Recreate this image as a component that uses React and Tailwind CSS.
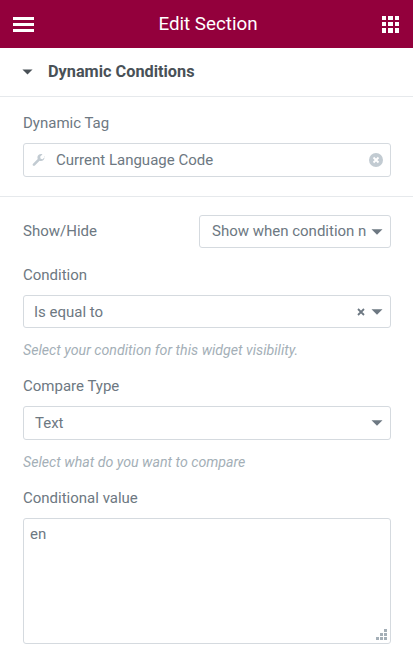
const font = { fontFamily: 'Roboto, sans-serif' };

function Caret({ color = '#6d7882', className = '' }) {
  return (
    <svg width="12" height="6" viewBox="0 0 12 6" className={className}>
      <path d="M0.5 0.2 H11.5 L6 5.8 Z" fill={color} />
    </svg>
  );
}

function Label({ children, className = '' }) {
  return <div className={`text-[15px] leading-[20px] text-[#6d7882] ${className}`}>{children}</div>;
}

function Hint({ children }) {
  return <div className="text-[14.2px] leading-[20px] italic text-[#a4afb7]">{children}</div>;
}

export default function App() {
  return (
    <div style={font} className="w-[413px] h-[654px] overflow-hidden bg-white">
      <header className="h-[48px] bg-[#93003c] flex items-center justify-between pl-[13px] pr-[14px] text-white">
        <div className="flex flex-col gap-[3px] w-[21px]">
          <span className="h-[3px] bg-white block" />
          <span className="h-[3px] bg-white block" />
          <span className="h-[3px] bg-white block" />
        </div>
        <div className="text-[18.8px] leading-[24px]">Edit Section</div>
        <div className="grid grid-cols-3 gap-[2px] w-[17px] h-[17px]">
          {[0, 1, 2, 3, 4, 5, 6, 7, 8].map((i) => (
            <span key={i} className="bg-white block" />
          ))}
        </div>
      </header>

      <section className="h-[49px] border-b border-[#e6e9ec] flex items-center pl-[22px]">
        <Caret color="#495157" className="mr-[15px] w-[11px]" />
        <div className="text-[16.3px] font-bold text-[#495157] leading-[20px]">Dynamic Conditions</div>
      </section>

      <section className="h-[100px] border-b border-[#e6e9ec] pl-[23px] pr-[22px] pt-[16px]">
        <Label>Dynamic Tag</Label>
        <div className="mt-[10px] h-[34px] border border-[#d5dadf] rounded-[3px] flex items-center pl-[8px] pr-[7px]">
          <svg width="14" height="14" viewBox="0 0 24 24" fill="#c2cbd2" className="mr-[10px]">
            <path d="M22.7 6.3l-4.2 4.2-3.6-.9-.9-3.6 4.2-4.2c-2.4-1-5.2-.6-7.1 1.3-1.9 1.9-2.4 4.6-1.4 7L1.3 18.5c-.9.9-.9 2.4 0 3.3.9.9 2.4.9 3.3 0l8.4-8.4c2.4 1 5.1.5 7-1.4 1.9-1.9 2.4-4.7 1.4-7.1z" transform="translate(0.5 0.5) scale(0.96)" />
          </svg>
          <div className="flex-1 text-[15px] text-[#6d7882]">Current Language Code</div>
          <svg width="14" height="14" viewBox="0 0 14 14">
            <circle cx="7" cy="7" r="7" fill="#c2cbd2" />
            <path d="M4.5 4.5l5 5M9.5 4.5l-5 5" stroke="#fff" strokeWidth="1.8" />
          </svg>
        </div>
      </section>

      <section className="pl-[23px] pr-[22px] pt-[18px]">
        <div className="flex items-center justify-between h-[33px]">
          <Label className="mb-[2px]">Show/Hide</Label>
          <div className="w-[192px] h-[33px] border border-[#d5dadf] rounded-[3px] flex items-center pl-[12px] pr-[7px] overflow-hidden">
            <div className="flex-1 overflow-hidden whitespace-nowrap text-[15px] text-[#6d7882]">Show when condition not met</div>
            <Caret className="ml-[5px] shrink-0" />
          </div>
        </div>

        <Label className="mt-[17px]">Condition</Label>
        <div className="mt-[10px] h-[33px] border border-[#d5dadf] rounded-[3px] flex items-center pl-[10px] pr-[7px]">
          <div className="flex-1 text-[15px] text-[#6d7882] pt-[1px]">Is equal to</div>
          <svg width="8" height="8" viewBox="0 0 8 8" className="mr-[6px]">
            <path d="M1 1l6 6M7 1L1 7" stroke="#6d7882" strokeWidth="1.8" />
          </svg>
          <Caret />
        </div>
        <div className="mt-[12px]"><Hint>Select your condition for this widget visibility.</Hint></div>

        <Label className="mt-[16px]">Compare Type</Label>
        <div className="mt-[10px] h-[34px] border border-[#d5dadf] rounded-[3px] flex items-center pl-[11px] pr-[7px]">
          <div className="flex-1 text-[15px] text-[#6d7882]">Text</div>
          <Caret />
        </div>
        <div className="mt-[12px]"><Hint>Select what do you want to compare</Hint></div>

        <Label className="mt-[16px]">Conditional value</Label>
        <div className="relative mt-[10px] h-[126px] border border-[#d5dadf] rounded-[3px] pl-[6px] pt-[5px] text-[15px] leading-[20px] text-[#6d7882]">
          en
          <svg width="12" height="12" viewBox="0 0 12 12" fill="#a4afb7" className="absolute right-[2px] bottom-[2px]">
            <rect x="8" y="0" width="3" height="3" />
            <rect x="4" y="4" width="3" height="3" />
            <rect x="8" y="4" width="3" height="3" />
            <rect x="0" y="8" width="3" height="3" />
            <rect x="4" y="8" width="3" height="3" />
            <rect x="8" y="8" width="3" height="3" />
          </svg>
        </div>
      </section>
    </div>
  );
}
